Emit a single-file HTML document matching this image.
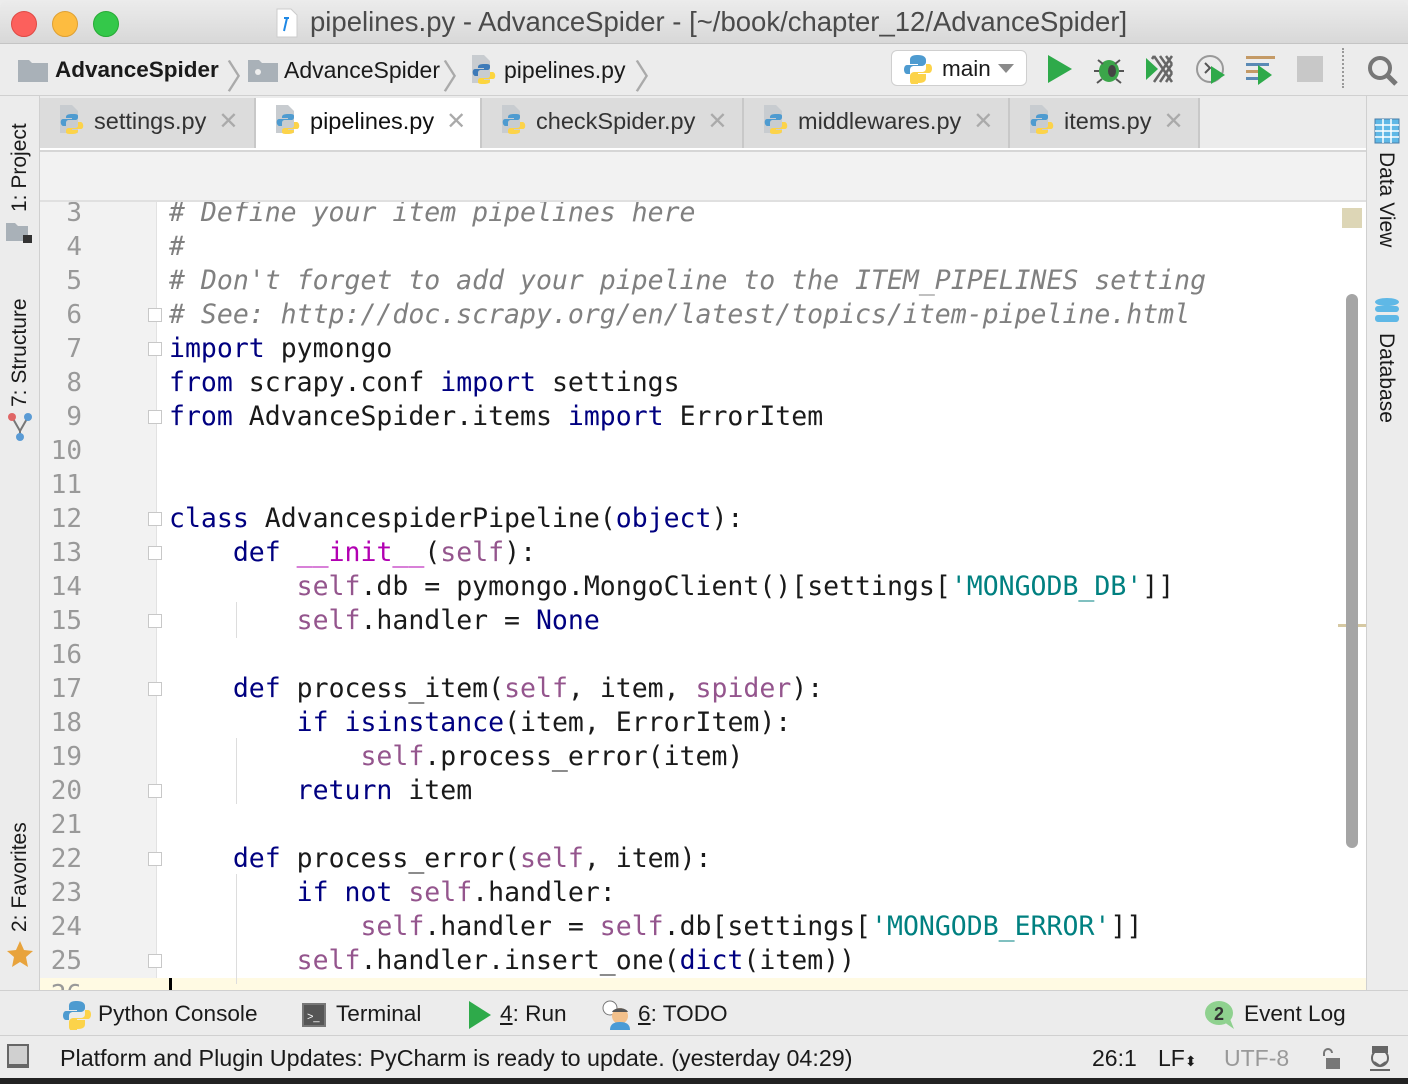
<!DOCTYPE html>
<html><head><meta charset="utf-8"><style>
*{margin:0;padding:0;box-sizing:border-box}
body{width:1408px;height:1084px;overflow:hidden;background:#ececec;font-family:"Liberation Sans",sans-serif;position:relative;color:#1a1a1a}
.a{position:absolute}
.code{font-family:"DejaVu Sans Mono","Liberation Mono",monospace;font-size:26.5px;white-space:pre;line-height:34px}
.k{color:#000080}.s{color:#94558d}.st{color:#008080}.c{color:#808080;font-style:italic}.m{color:#b200b2}
.ln{position:absolute;left:40px;width:42px;text-align:right;color:#999;font-family:"DejaVu Sans Mono",monospace;font-size:26px;line-height:34px}
.tab{position:absolute;top:98px;height:50px;background:#dcdcdc;border-right:2px solid #c8c8c8;font-size:23.5px;line-height:46px;color:#333}
.tab .x{color:#aaa;margin-left:12px;font-size:24px}
.vt{position:absolute;font-size:21px;white-space:nowrap;transform-origin:0 0}
.fold{position:absolute;left:108px;width:14px;height:14px;border:1px solid #c8c8c8;background:#fff}
</style></head><body>
<!-- title bar -->
<div class="a" style="left:0;top:0;width:1408px;height:44px;background:linear-gradient(#ececec,#d8d8d8);border-bottom:1px solid #c4c4c4;border-radius:8px 8px 0 0"></div>
<div class="a" style="left:11px;top:11px;width:26px;height:26px;border-radius:50%;background:#fc605c;border:1px solid #de4a45"></div>
<div class="a" style="left:52px;top:11px;width:26px;height:26px;border-radius:50%;background:#fdbc40;border:1px solid #dea033"></div>
<div class="a" style="left:93px;top:11px;width:26px;height:26px;border-radius:50%;background:#34c84a;border:1px solid #27aa35"></div>
<svg class="a" style="left:276px;top:8px" width="22" height="30"><path d="M1 1h14l6 6v22H1z" fill="#fff" stroke="#ccc"/><path d="M11 10l-3 13" stroke="#1e88e5" stroke-width="2"/><path d="M8 10h5" stroke="#1e88e5" stroke-width="2"/></svg>
<div class="a" style="left:310px;top:6px;font-size:27.5px;color:#4a4a4a">pipelines.py - AdvanceSpider - [~/book/chapter_12/AdvanceSpider]</div>
<!-- nav bar -->
<div class="a" style="left:0;top:44px;width:1408px;height:52px;background:#ececec;border-bottom:1px solid #d0d0d0"></div>
<svg class="a" style="left:18px;top:58px" width="30" height="24"><path d="M0 2h11l3 3h16v19H0z" fill="#a9b1b8"/></svg>
<div class="a" style="left:55px;top:57px;font-size:22.5px;font-weight:bold">AdvanceSpider</div>
<div class="a" style="left:226px;top:50px;font-size:34px;color:#aaa;font-weight:100">〉</div>
<svg class="a" style="left:248px;top:58px" width="30" height="24"><path d="M0 2h11l3 3h16v19H0z" fill="#a9b1b8"/><circle cx="10" cy="14" r="3" fill="#eee"/></svg>
<div class="a" style="left:284px;top:57px;font-size:23px">AdvanceSpider</div>
<div class="a" style="left:442px;top:50px;font-size:34px;color:#aaa">〉</div>
<svg class="a" style="left:470px;top:54px" width="30" height="32"><path d="M2 1h12l6 6v22H2z" fill="#c8ccd0"/><path d="M14 10c-6 0-6 2-6 4h6v1H5c-3 0-3 6 0 7h3v-3c0-2 1-3 3-3h6c2 0 3-1 3-3v-1c0-2-2-2-6-2z" fill="#3d7ab8"/><path d="M14 30c6 0 6-2 6-4h-6v-1h9c3 0 3-6 0-7h-3v3c0 2-1 3-3 3h-6c-2 0-3 1-3 3v1c0 2 2 2 6 2z" fill="#fcd53f"/></svg>
<div class="a" style="left:504px;top:57px;font-size:23px">pipelines.py</div>
<div class="a" style="left:634px;top:50px;font-size:34px;color:#aaa">〉</div>
<div class="a" style="left:891px;top:50px;width:136px;height:36px;background:#fff;border:1px solid #cfcfcf;border-radius:6px"></div>
<svg class="a" style="left:903px;top:54px" width="30" height="30"><path d="M15 1c-8 0-8 3-8 6v3h8v1H4c-4 0-4 9 0 9h3v-4c0-3 2-4 4-4h8c2 0 4-2 4-4V6c0-3-3-5-8-5z" fill="#4e9bd0"/><path d="M15 29c8 0 8-3 8-6v-3h-8v-1h11c4 0 4-9 0-9h-3v4c0 3-2 4-4 4h-8c-2 0-4 2-4 4v5c0 3 3 5 8 5z" fill="#fcd34a"/></svg>
<div class="a" style="left:942px;top:56px;font-size:22.5px">main</div>
<div class="a" style="left:998px;top:64px;border-left:8px solid transparent;border-right:8px solid transparent;border-top:9px solid #8a8a8a"></div>
<svg class="a" style="left:1046px;top:54px" width="28" height="30"><path d="M2 1l24 14L2 29z" fill="#2eaa4a"/></svg>
<svg class="a" style="left:1092px;top:52px" width="34" height="34"><ellipse cx="17" cy="19" rx="10" ry="11" fill="#3ba54a"/><path d="M6 8l5 4M28 8l-5 4M2 19h5M27 19h5M5 31l5-4M29 31l-5-4" stroke="#555" stroke-width="2"/><ellipse cx="20" cy="19" rx="4" ry="6" fill="#444"/></svg>
<svg class="a" style="left:1142px;top:52px" width="34" height="34"><path d="M4 6l12 11L4 28z" fill="#2eaa4a"/><path d="M12 4l18 26M18 4l12 17M24 4l6 8M30 4L12 30M30 12L18 30M30 21l-6 9M12 4l-2 3" stroke="#666" stroke-width="2.5"/></svg>
<svg class="a" style="left:1194px;top:52px" width="34" height="34"><circle cx="16" cy="17" r="13" fill="none" stroke="#999" stroke-width="2"/><path d="M11 11l5 5-5 5" stroke="#555" stroke-width="2" fill="none"/><path d="M17 14l14 9-14 9z" fill="#2eaa4a"/></svg>
<svg class="a" style="left:1242px;top:54px" width="34" height="32"><rect x="4" y="2" width="29" height="3" fill="#c49a66"/><rect x="4" y="9" width="23" height="3" fill="#5b8ab5"/><rect x="4" y="16" width="16" height="3" fill="#c49a66"/><rect x="4" y="23" width="12" height="3" fill="#5b8ab5"/><path d="M16 11l14 10-14 10z" fill="#2eaa4a"/></svg>
<div class="a" style="left:1297px;top:56px;width:26px;height:26px;background:#c8c8c8"></div>
<div class="a" style="left:1342px;top:48px;height:40px;border-left:2px dotted #999"></div>
<svg class="a" style="left:1366px;top:54px" width="34" height="34"><circle cx="14" cy="14" r="10" fill="none" stroke="#777" stroke-width="4"/><path d="M21 21l9 9" stroke="#777" stroke-width="5"/></svg>
<!-- left strip -->
<div class="a" style="left:0;top:96px;width:40px;height:894px;background:#ececec;border-right:1px solid #d0d0d0"></div>
<div class="vt" style="left:8px;top:212px;transform:rotate(-90deg)">1: Project</div>
<svg class="a" style="left:6px;top:222px" width="28" height="22"><path d="M0 1h9l3 3h10v15H0z" fill="#a9b1b8"/><rect x="17" y="13" width="9" height="8" fill="#333"/></svg>
<div class="vt" style="left:8px;top:407px;transform:rotate(-90deg)">7: Structure</div>
<svg class="a" style="left:6px;top:412px" width="28" height="30"><path d="M6 5l8 14M22 5l-8 14M14 19v6" stroke="#777" stroke-width="2"/><circle cx="6" cy="5" r="4" fill="#e06666"/><circle cx="22" cy="5" r="4" fill="#5a9bd5"/><circle cx="14" cy="25" r="4" fill="#5a9bd5"/></svg>
<div class="vt" style="left:8px;top:932px;transform:rotate(-90deg)">2: Favorites</div>
<svg class="a" style="left:6px;top:940px" width="28" height="28"><path d="M14 1l4 9 9 1-7 6 2 10-8-5-8 5 2-10-7-6 9-1z" fill="#e8a33c"/></svg>
<!-- right strip -->
<div class="a" style="left:1366px;top:96px;width:42px;height:894px;background:#ececec;border-left:1px solid #d0d0d0"></div>
<svg class="a" style="left:1374px;top:118px" width="26" height="26"><rect x="1" y="1" width="24" height="24" fill="#5fb8e6" stroke="#4a7ea8"/><path d="M1 7h24M1 13h24M1 19h24M9 1v24M17 1v24" stroke="#fff" stroke-width="1.5"/></svg>
<div class="vt" style="left:1398px;top:152px;transform:rotate(90deg)">Data View</div>
<svg class="a" style="left:1374px;top:297px" width="26" height="28"><ellipse cx="13" cy="5" rx="12" ry="4" fill="#5fb8e6"/><rect x="1" y="9" width="24" height="6" rx="3" fill="#5fb8e6"/><rect x="1" y="18" width="24" height="7" rx="3" fill="#5fb8e6"/></svg>
<div class="vt" style="left:1398px;top:333px;transform:rotate(90deg)">Database</div>
<!-- tabs -->
<div class="a" style="left:40px;top:96px;width:1326px;height:56px;background:#ececec"></div>
<div class="tab" style="left:40px;width:216px"><span style="margin-left:54px">settings.py</span><span class="x">✕</span></div>
<div class="tab" style="left:256px;width:226px;background:#fff;height:52px;color:#111"><span style="margin-left:54px">pipelines.py</span><span class="x">✕</span></div>
<div class="tab" style="left:482px;width:262px"><span style="margin-left:54px">checkSpider.py</span><span class="x">✕</span></div>
<div class="tab" style="left:744px;width:266px"><span style="margin-left:54px">middlewares.py</span><span class="x">✕</span></div>
<div class="tab" style="left:1010px;width:190px"><span style="margin-left:54px">items.py</span><span class="x">✕</span></div>
<div class="a" style="left:40px;top:148px;width:1326px;height:4px;background:#fff;border-bottom:2px solid #d6d6d6"></div>
<svg width="0" height="0" style="position:absolute"><defs><g id="py"><path d="M2 1h12l6 6v22H2z" fill="#c8ccd0"/><path d="M14 10c-6 0-6 2-6 4h6v1H5c-3 0-3 6 0 7h3v-3c0-2 1-3 3-3h6c2 0 3-1 3-3v-1c0-2-2-2-6-2z" fill="#4e9bd0"/><path d="M14 30c6 0 6-2 6-4h-6v-1h9c3 0 3-6 0-7h-3v3c0 2-1 3-3 3h-6c-2 0-3 1-3 3v1c0 2 2 2 6 2z" fill="#fcd34a"/></g></defs></svg>
<svg class="a" style="left:58px;top:104px" width="30" height="32"><use href="#py"/></svg>
<svg class="a" style="left:274px;top:104px" width="30" height="32"><use href="#py"/></svg>
<svg class="a" style="left:500px;top:104px" width="30" height="32"><use href="#py"/></svg>
<svg class="a" style="left:762px;top:104px" width="30" height="32"><use href="#py"/></svg>
<svg class="a" style="left:1028px;top:104px" width="30" height="32"><use href="#py"/></svg>
<!-- breadcrumb area -->
<div class="a" style="left:40px;top:152px;width:1326px;height:50px;background:#f2f2f2;border-bottom:2px solid #e0e0e0"></div>
<!-- editor -->
<div class="a" style="left:40px;top:202px;width:1326px;height:788px;overflow:hidden;background:#fff">
 <div class="a" style="left:0;top:0;width:117px;height:788px;background:#f2f2f2;border-right:1px solid #e2e2e2"></div>
 <div class="a" style="left:0;top:776px;width:1326px;height:20px;background:#fffae3"></div>
 <div class="a" style="left:129px;top:776px;width:3px;height:20px;background:#000"></div>
 <div class="a" style="left:1302px;top:6px;width:20px;height:20px;background:#ddd6b6"></div>
 <div class="a" style="left:1298px;top:422px;width:28px;height:3px;background:#d6c9a3"></div>
 <div class="a" style="left:1306px;top:92px;width:12px;height:554px;background:#a5a5a5;border-radius:6px"></div>
 <div class="a" style="left:196px;top:400px;height:36px;border-left:1px solid #ddd"></div>
 <div class="a" style="left:196px;top:536px;height:66px;border-left:1px solid #ddd"></div>
 <div class="a" style="left:196px;top:672px;height:110px;border-left:1px solid #ddd"></div>
 <div class="fold" style="top:106px"></div><div class="fold" style="top:140px"></div><div class="fold" style="top:208px"></div>
 <div class="fold" style="top:310px"></div><div class="fold" style="top:344px"></div><div class="fold" style="top:412px"></div>
 <div class="fold" style="top:480px"></div><div class="fold" style="top:582px"></div><div class="fold" style="top:650px"></div><div class="fold" style="top:752px"></div>
 <div class="a" style="left:0;top:-6px">
  <div class="ln" style="left:0;top:0">3<br>4<br>5<br>6<br>7<br>8<br>9<br>10<br>11<br>12<br>13<br>14<br>15<br>16<br>17<br>18<br>19<br>20<br>21<br>22<br>23<br>24<br>25<br>26</div>
  <div class="a code" style="left:129px;top:0"><span class="c"># Define your item pipelines here</span>
<span class="c">#</span>
<span class="c"># Don't forget to add your pipeline to the ITEM_PIPELINES setting</span>
<span class="c"># See: http://doc.scrapy.org/en/latest/topics/item-pipeline.html</span>
<span class="k">import</span> pymongo
<span class="k">from</span> scrapy.conf <span class="k">import</span> settings
<span class="k">from</span> AdvanceSpider.items <span class="k">import</span> ErrorItem


<span class="k">class</span> AdvancespiderPipeline(<span class="k">object</span>):
    <span class="k">def</span> <span class="m">__init__</span>(<span class="s">self</span>):
        <span class="s">self</span>.db = pymongo.MongoClient()[settings[<span class="st">'MONGODB_DB'</span>]]
        <span class="s">self</span>.handler = <span class="k">None</span>

    <span class="k">def</span> process_item(<span class="s">self</span>, item, <span class="s">spider</span>):
        <span class="k">if</span> <span class="k">isinstance</span>(item, ErrorItem):
            <span class="s">self</span>.process_error(item)
        <span class="k">return</span> item

    <span class="k">def</span> process_error(<span class="s">self</span>, item):
        <span class="k">if not</span> <span class="s">self</span>.handler:
            <span class="s">self</span>.handler = <span class="s">self</span>.db[settings[<span class="st">'MONGODB_ERROR'</span>]]
        <span class="s">self</span>.handler.insert_one(<span class="k">dict</span>(item))
</div>
 </div>
</div>
<!-- bottom tool bar -->
<div class="a" style="left:0;top:990px;width:1408px;height:46px;background:#ececec;border-top:1px solid #d0d0d0;border-bottom:1px solid #d0d0d0"></div>
<svg class="a" style="left:62px;top:1000px" width="30" height="30"><path d="M15 1c-8 0-8 3-8 6v3h8v1H4c-4 0-4 9 0 9h3v-4c0-3 2-4 4-4h8c2 0 4-2 4-4V6c0-3-3-5-8-5z" fill="#4e9bd0"/><path d="M15 29c8 0 8-3 8-6v-3h-8v-1h11c4 0 4-9 0-9h-3v4c0 3-2 4-4 4h-8c-2 0-4 2-4 4v5c0 3 3 5 8 5z" fill="#fcd34a"/></svg>
<div class="a" style="left:98px;top:1001px;font-size:22.6px">Python Console</div>
<div class="a" style="left:302px;top:1003px;width:24px;height:24px;background:#555;border:2px solid #777"><span style="color:#fff;font-size:11px;position:absolute;left:3px;top:6px">&gt;_</span></div>
<div class="a" style="left:336px;top:1001px;font-size:22.6px">Terminal</div>
<svg class="a" style="left:468px;top:1000px" width="24" height="30"><path d="M1 1l22 14L1 29z" fill="#2eaa4a"/></svg>
<div class="a" style="left:500px;top:1001px;font-size:22.6px"><u>4</u>: Run</div>
<svg class="a" style="left:602px;top:1000px" width="30" height="30"><circle cx="8" cy="8" r="7" fill="#fff" stroke="#777"/><circle cx="18" cy="16" r="8" fill="#f2c08b"/><path d="M8 30c0-6 4-8 10-8s10 2 10 8z" fill="#4a9bd6"/><path d="M10 12c2-5 14-5 16 0z" fill="#555"/></svg>
<div class="a" style="left:638px;top:1001px;font-size:22.6px"><u>6</u>: TODO</div>
<svg class="a" style="left:1204px;top:1000px" width="32" height="30"><ellipse cx="15" cy="13" rx="14" ry="12" fill="#8fd18f"/><path d="M20 22l10 7-4-10z" fill="#8fd18f"/><text x="15" y="20" text-anchor="middle" font-size="18" font-weight="bold" fill="#333" font-family="Liberation Sans">2</text></svg>
<div class="a" style="left:1244px;top:1001px;font-size:22.6px">Event Log</div>
<!-- status bar -->
<div class="a" style="left:0;top:1036px;width:1408px;height:42px;background:#ececec"></div>
<div class="a" style="left:7px;top:1044px;width:22px;height:24px;background:#d0d0d0;border:2px solid #666;border-bottom-width:4px"></div>
<div class="a" style="left:60px;top:1045px;font-size:23.3px">Platform and Plugin Updates: PyCharm is ready to update. (yesterday 04:29)</div>
<div class="a" style="left:1092px;top:1045px;font-size:23px">26:1</div>
<div class="a" style="left:1158px;top:1045px;font-size:23px">LF<span style="font-size:14px">⬍</span></div>
<div class="a" style="left:1224px;top:1045px;font-size:23px;color:#999">UTF-8</div>
<svg class="a" style="left:1320px;top:1048px" width="22" height="22"><path d="M4 8V5a4 4 0 0 1 8 0" fill="none" stroke="#777" stroke-width="2"/><rect x="6" y="10" width="14" height="11" fill="#777"/></svg>
<svg class="a" style="left:1366px;top:1044px" width="28" height="28"><circle cx="14" cy="14" r="8" fill="none" stroke="#666" stroke-width="2"/><rect x="6" y="2" width="16" height="7" fill="#666"/><path d="M4 26h20M8 18l6 4 6-4" stroke="#666" stroke-width="2" fill="none"/></svg>
<div class="a" style="left:0;top:1078px;width:1408px;height:6px;background:#222"></div>
</body></html>
